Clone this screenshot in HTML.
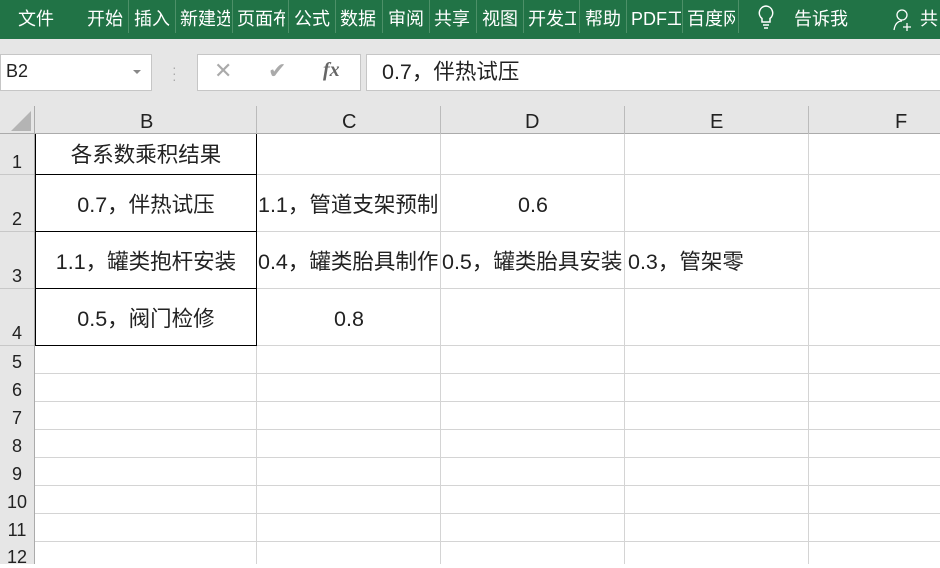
<!DOCTYPE html><html><head><meta charset="utf-8"><style>
*{margin:0;padding:0;box-sizing:border-box}
body{width:940px;height:564px;overflow:hidden;background:#fff;font-family:"Liberation Sans","Noto Sans CJK SC",sans-serif;position:relative}
.a{position:absolute}
.rib{left:0;top:0;width:940px;height:39px;background:#217346;color:#fff;font-size:18px}
.rib span{position:absolute;top:5px;white-space:nowrap;overflow:hidden}
.sep{position:absolute;top:0;width:1px;height:33px;background:#4d9068}
.t{font-size:21.5px;color:#222;white-space:nowrap;line-height:24px;height:24px}
.c{text-align:center}
.rn{position:absolute;left:0;width:34px;text-align:center;font-size:18px;color:#222}
.hl{position:absolute;left:35px;width:905px;height:1px;background:#d4d4d4}
.vl{position:absolute;top:134px;width:1px;height:430px;background:#d4d4d4}
</style></head><body>
<div class="a rib">
<span style="left:18px">文件</span>
<span style="left:87px">开始</span><div class="sep" style="left:128px"></div>
<span style="left:134px">插入</span><div class="sep" style="left:175px"></div>
<span style="left:180px;width:50px">新建选</span><div class="sep" style="left:232px"></div>
<span style="left:237px;width:48px">页面布</span><div class="sep" style="left:288px"></div>
<span style="left:294px">公式</span><div class="sep" style="left:335px"></div>
<span style="left:340px">数据</span><div class="sep" style="left:382px"></div>
<span style="left:388px">审阅</span><div class="sep" style="left:429px"></div>
<span style="left:434px">共享</span><div class="sep" style="left:476px"></div>
<span style="left:482px">视图</span><div class="sep" style="left:523px"></div>
<span style="left:528px;width:48px">开发工</span><div class="sep" style="left:579px"></div>
<span style="left:585px">帮助</span><div class="sep" style="left:626px"></div>
<span style="left:631px;width:50px">PDF工</span><div class="sep" style="left:682px"></div>
<span style="left:687px;width:48px">百度网</span><div class="sep" style="left:738px"></div>
<svg class="a" style="left:755px;top:4px" width="22" height="26" viewBox="0 0 22 26"><path d="M11 2a7 7 0 0 0-4 12.5V18h8v-3.5A7 7 0 0 0 11 2z M8 21h6 M9 24h4" fill="none" stroke="#fff" stroke-width="1.5"/></svg>
<span style="left:794px">告诉我</span>
<svg class="a" style="left:892px;top:8px" width="22" height="24" viewBox="0 0 22 24"><circle cx="10" cy="7" r="5" fill="none" stroke="#fff" stroke-width="1.3"/><path d="M2 22c1-6 4-9 8-9M15 15v8M11 19h8" fill="none" stroke="#fff" stroke-width="1.3"/></svg>
<span style="left:920px">共</span>
</div>
<div class="a" style="left:0;top:39px;width:940px;height:95px;background:#e6e6e6"></div>
<div class="a" style="left:0;top:54px;width:152px;height:37px;background:#fff;border:1px solid #c6c6c6"></div>
<div class="a" style="left:6px;top:61px;font-size:18px;color:#222">B2</div>
<div class="a" style="left:133px;top:70px;width:0;height:0;border-left:4px solid transparent;border-right:4px solid transparent;border-top:4px solid #888"></div>
<div class="a" style="left:172px;top:64px;color:#aaa;font-size:14px;line-height:6px">·<br>·<br>·</div>
<div class="a" style="left:197px;top:54px;width:164px;height:37px;background:#fff;border:1px solid #c6c6c6"></div>
<div class="a" style="left:214px;top:58px;font-size:22px;color:#aaa">✕</div>
<div class="a" style="left:268px;top:58px;font-size:22px;color:#aaa">✔</div>
<div class="a" style="left:323px;top:59px;font-size:20px;color:#666;font-family:'Liberation Serif',serif;font-style:italic;font-weight:bold">fx</div>
<div class="a" style="left:366px;top:54px;width:574px;height:37px;background:#fff;border:1px solid #c6c6c6;border-right:none"></div>
<div class="a t" style="left:382px;top:60px">0.7，伴热试压</div>
<div class="a" style="left:0;top:106px;width:940px;height:28px;border-bottom:1px solid #ababab"></div>
<svg class="a" style="left:10px;top:110px" width="22" height="22"><path d="M21 1V21H1Z" fill="#b4b4b4"/></svg>
<div class="a" style="left:34px;top:106px;width:1px;height:458px;background:#ababab"></div>
<div class="a t" style="left:140px;top:110px;font-size:20px">B</div>
<div class="a t" style="left:342px;top:110px;font-size:20px">C</div>
<div class="a t" style="left:525px;top:110px;font-size:20px">D</div>
<div class="a t" style="left:710px;top:110px;font-size:20px">E</div>
<div class="a t" style="left:895px;top:110px;font-size:20px">F</div>
<div class="a" style="left:256px;top:106px;width:1px;height:28px;background:#bbb"></div>
<div class="a" style="left:440px;top:106px;width:1px;height:28px;background:#bbb"></div>
<div class="a" style="left:624px;top:106px;width:1px;height:28px;background:#bbb"></div>
<div class="a" style="left:808px;top:106px;width:1px;height:28px;background:#bbb"></div>
<div class="a" style="left:0;top:134px;width:34px;height:430px;background:#e6e6e6"></div>
<div class="vl" style="left:256px"></div><div class="vl" style="left:440px"></div><div class="vl" style="left:624px"></div><div class="vl" style="left:808px"></div>
<div class="hl" style="top:174px"></div><div class="hl" style="top:231px"></div><div class="hl" style="top:288px"></div><div class="hl" style="top:345px"></div>
<div class="hl" style="top:373px"></div><div class="hl" style="top:401px"></div><div class="hl" style="top:429px"></div><div class="hl" style="top:457px"></div><div class="hl" style="top:485px"></div><div class="hl" style="top:513px"></div><div class="hl" style="top:541px"></div>
<div class="a" style="left:0;top:174px;width:34px;height:1px;background:#c8c8c8"></div>
<div class="a" style="left:0;top:231px;width:34px;height:1px;background:#c8c8c8"></div>
<div class="a" style="left:0;top:288px;width:34px;height:1px;background:#c8c8c8"></div>
<div class="a" style="left:0;top:345px;width:34px;height:1px;background:#c8c8c8"></div>
<div class="rn" style="top:152px">1</div><div class="rn" style="top:209px">2</div><div class="rn" style="top:266px">3</div><div class="rn" style="top:323px">4</div>
<div class="rn" style="top:352px">5</div><div class="rn" style="top:380px">6</div><div class="rn" style="top:408px">7</div><div class="rn" style="top:436px">8</div><div class="rn" style="top:464px">9</div><div class="rn" style="top:492px">10</div><div class="rn" style="top:520px">11</div><div class="rn" style="top:547px">12</div>
<div class="a" style="left:35px;top:134px;width:222px;height:212px;border:1px solid #000;border-top:none"></div>
<div class="a" style="left:35px;top:174px;width:222px;height:1px;background:#000"></div>
<div class="a" style="left:35px;top:231px;width:222px;height:1px;background:#000"></div>
<div class="a" style="left:35px;top:288px;width:222px;height:1px;background:#000"></div>
<div class="a" style="left:256px;top:134px;width:1px;height:212px;background:#000"></div>
<div class="a t c" style="left:35px;width:222px;top:143px">各系数乘积结果</div>
<div class="a t c" style="left:35px;width:222px;top:193px">0.7，伴热试压</div>
<div class="a t c" style="left:35px;width:222px;top:250px">1.1，罐类抱杆安装</div>
<div class="a t c" style="left:35px;width:222px;top:307px">0.5，阀门检修</div>
<div class="a t" style="left:258px;top:193px;width:182px;overflow:hidden">1.1，管道支架预制</div>
<div class="a t c" style="left:441px;width:184px;top:193px">0.6</div>
<div class="a t" style="left:258px;top:250px;width:182px;overflow:hidden">0.4，罐类胎具制作</div>
<div class="a t" style="left:442px;top:250px;width:182px;overflow:hidden">0.5，罐类胎具安装</div>
<div class="a t" style="left:628px;top:250px">0.3，管架零</div>
<div class="a t c" style="left:257px;width:184px;top:307px">0.8</div>
</body></html>
